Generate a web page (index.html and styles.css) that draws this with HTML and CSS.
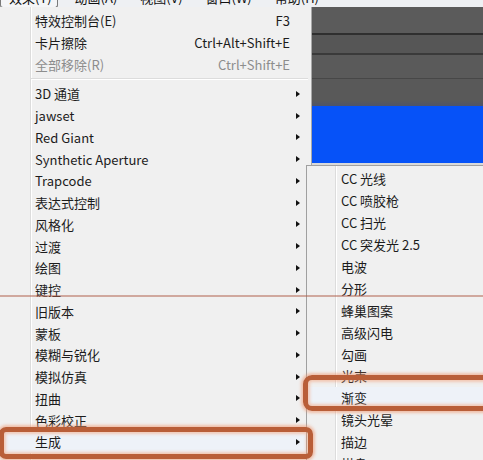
FILE: index.html
```html
<!DOCTYPE html>
<html lang="zh-CN">
<head>
<meta charset="utf-8">
<title>After Effects 效果菜单</title>
<link rel="stylesheet" href="styles.css">
</head>
<body>
<div class="app">
  <div class="menubar">
    <div class="mb-row">
      <div class="mb-item active">效果(T)</div>
      <div class="mb-item">动画(A)</div>
      <div class="mb-item">视图(V)</div>
      <div class="mb-item">窗口(W)</div>
      <div class="mb-item">帮助(H)</div>
    </div>
  </div>
  <div class="workspace">
    <div class="under"></div>
    <div class="viewer">
      <div class="band b1"></div>
      <div class="band l1"></div>
      <div class="band b2"></div>
      <div class="band l2"></div>
      <div class="band b3"></div>
      <div class="band l3"></div>
      <div class="band b4"></div>
      <div class="band blue"></div>
    </div>
  </div>
</div>

<div class="menu main-menu">
  <div class="mi"><span class="lbl">特效控制台(E)</span><span class="key">F3</span></div>
  <div class="mi"><span class="lbl">卡片擦除</span><span class="key">Ctrl+Alt+Shift+E</span></div>
  <div class="mi disabled"><span class="lbl">全部移除(R)</span><span class="key">Ctrl+Shift+E</span></div>
  <div class="sep"></div>
  <div class="mi"><span class="lbl">3D 通道</span><i class="arr"></i></div>
  <div class="mi"><span class="lbl">jawset</span><i class="arr"></i></div>
  <div class="mi"><span class="lbl">Red Giant</span><i class="arr"></i></div>
  <div class="mi"><span class="lbl">Synthetic Aperture</span><i class="arr"></i></div>
  <div class="mi"><span class="lbl">Trapcode</span><i class="arr"></i></div>
  <div class="mi"><span class="lbl">表达式控制</span><i class="arr"></i></div>
  <div class="mi"><span class="lbl">风格化</span><i class="arr"></i></div>
  <div class="mi"><span class="lbl">过渡</span><i class="arr"></i></div>
  <div class="mi"><span class="lbl">绘图</span><i class="arr"></i></div>
  <div class="mi"><span class="lbl">键控</span><i class="arr"></i></div>
  <div class="mi"><span class="lbl">旧版本</span><i class="arr"></i></div>
  <div class="mi"><span class="lbl">蒙板</span><i class="arr"></i></div>
  <div class="mi"><span class="lbl">模糊与锐化</span><i class="arr"></i></div>
  <div class="mi"><span class="lbl">模拟仿真</span><i class="arr"></i></div>
  <div class="mi"><span class="lbl">扭曲</span><i class="arr"></i></div>
  <div class="mi"><span class="lbl">色彩校正</span><i class="arr"></i></div>
  <div class="mi hot"><span class="lbl">生成</span><i class="arr"></i></div>
</div>

<div class="menu sub-menu">
  <div class="mi"><span class="lbl">CC 光线</span></div>
  <div class="mi"><span class="lbl">CC 喷胶枪</span></div>
  <div class="mi"><span class="lbl">CC 扫光</span></div>
  <div class="mi"><span class="lbl">CC 突发光 2.5</span></div>
  <div class="mi"><span class="lbl">电波</span></div>
  <div class="mi"><span class="lbl">分形</span></div>
  <div class="mi"><span class="lbl">蜂巢图案</span></div>
  <div class="mi"><span class="lbl">高级闪电</span></div>
  <div class="mi"><span class="lbl">勾画</span></div>
  <div class="mi"><span class="lbl">光束</span></div>
  <div class="mi hot"><span class="lbl">渐变</span></div>
  <div class="mi"><span class="lbl">镜头光晕</span></div>
  <div class="mi"><span class="lbl">描边</span></div>
  <div class="mi"><span class="lbl">棋盘</span></div>
</div>

<div class="mark mark-gen"></div>
<div class="mark mark-grad"></div>
<div class="guide-line"></div>
</body>
</html>
```

FILE: styles.css
```css
* { box-sizing: border-box; }

html, body {
  margin: 0;
  padding: 0;
}

body {
  width: 483px;
  height: 460px;
  overflow: hidden;
  position: relative;
  background: #f0f0f0;
  font-family: "Noto Sans CJK SC", "Noto Sans", sans-serif;
  font-size: 13px;
  color: #1c1c1c;
}

/* ---------- app background ---------- */
.menubar {
  height: 7px;
  overflow: hidden;
  background: #eef0f3;
}

.mb-row {
  display: flex;
  margin-top: -12px;
  line-height: 19px;
}

.mb-item {
  padding: 0 6px 0 9px;
  margin-right: 8px;
  color: #111;
}

.mb-item.active {
  border: 1px solid #7a7a7a;
  border-top: none;
  border-radius: 0 0 3px 3px;
  background: #f4f5f7;
  padding: 0 5px 0 8px;
}

.workspace {
  display: flex;
  height: 158px;
}

.under {
  width: 312px;
  flex: none;
}

.viewer {
  flex: 1;
  display: flex;
  flex-direction: column;
  background: #585858;
  border-bottom: 2px solid #d9d9d9;
}

.band { flex: none; }
.b1 { height: 26px; background: #5b5b5b; }
.l1 { height: 2px; background: #2f2f2f; }
.b2 { height: 18px; background: #565656; }
.l2 { height: 2px; background: #3a3a3a; }
.b3 { height: 23px; background: #5a5a5a; }
.l3 { height: 1px; background: #474747; }
.b4 { height: 27px; background: linear-gradient(#595959 80%, #4e5468); }
.blue { flex: 1; background: #0652f8; }

/* ---------- menus ---------- */
.menu {
  position: absolute;
  background-color: #f0f0f0;
  display: flex;
  flex-direction: column;
}

.main-menu {
  left: 0;
  top: 7px;
  width: 312px;
  height: 470px;
  padding-top: 3px;
  border-right: 1px solid #a8a8a8;
  background-image: linear-gradient(to right, transparent 30px, #dcdcdc 30px, #dcdcdc 31px, #ffffff 31px, #ffffff 32px, transparent 32px);
}

.sub-menu {
  left: 306px;
  top: 165px;
  width: 190px;
  height: 310px;
  padding-top: 2px;
  border-left: 1px solid #a0a0a0;
  border-top: 1px solid #a0a0a0;
  background-image: linear-gradient(to right, transparent 28px, #dcdcdc 28px, #dcdcdc 29px, #ffffff 29px, #ffffff 30px, transparent 30px);
  box-shadow: -1px 0 0 #ffffff inset;
}

.mi {
  display: flex;
  align-items: center;
  height: 21.75px;
  flex: none;
  padding-left: 35px;
  white-space: nowrap;
}

.sub-menu .mi {
  height: 21.9px;
  padding-left: 34px;
}

.mi.disabled { color: #8d8d8d; }

.mi.hot { background: #eef2f8; }

.key {
  margin-left: auto;
  margin-right: 21px;
}

.arr {
  margin-left: auto;
  margin-right: 11px;
  width: 0;
  height: 0;
  border-left: 4px solid #111;
  border-top: 3.5px solid transparent;
  border-bottom: 3.5px solid transparent;
}

.sep {
  height: 7.7px;
  flex: none;
  margin: 0 3px 0 31px;
  background: linear-gradient(transparent 3px, #dcdcdc 3px, #dcdcdc 4px, #ffffff 4px, #ffffff 5px, transparent 5px);
}

/* ---------- annotations ---------- */
.mark {
  position: absolute;
  border: 5px solid #b95e38;
  border-radius: 7px;
  box-shadow: 0 0 3px 2px rgba(240, 150, 110, 0.55), inset 0 0 3px 2px rgba(245, 160, 120, 0.5);
}

.mark-gen {
  left: -1px;
  top: 427px;
  width: 314px;
  height: 32px;
}

.mark-grad {
  left: 303px;
  top: 375px;
  width: 200px;
  height: 36px;
  border-radius: 9px;
}

.guide-line {
  position: absolute;
  left: 0;
  top: 295px;
  width: 483px;
  height: 2px;
  background: rgba(175, 95, 75, 0.5);
}
```
